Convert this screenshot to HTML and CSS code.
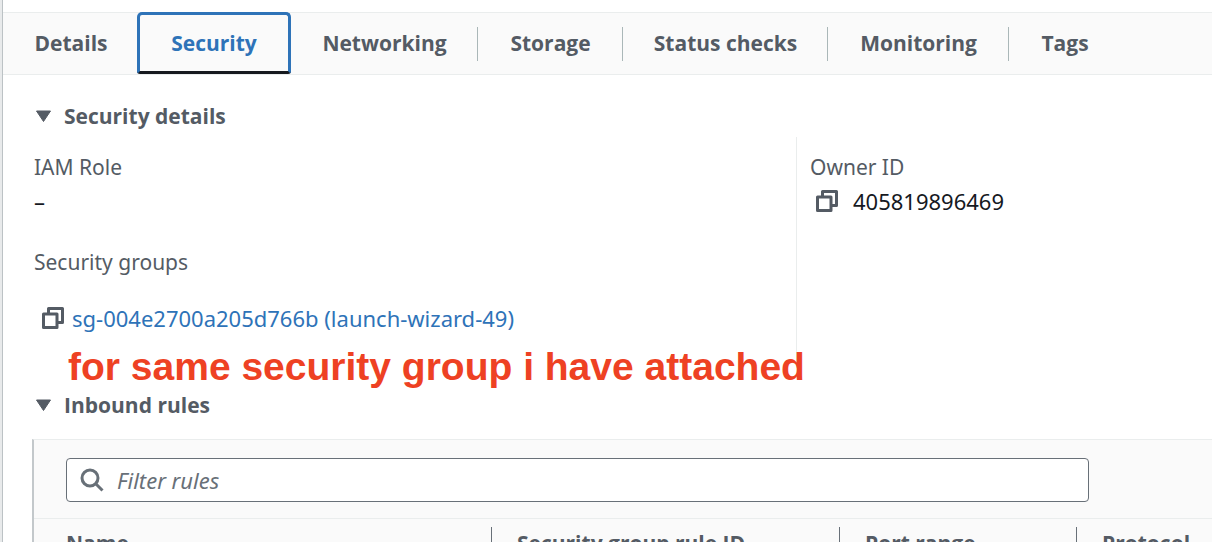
FILE: index.html
```html
<!DOCTYPE html>
<html lang="en">
<head>
<meta charset="utf-8">
<title>Instance security</title>
<link rel="stylesheet" href="styles.css">
</head>
<body>
<svg class="sprite" aria-hidden="true">
  <symbol id="copy" viewBox="0 0 24 24">
    <path d="M2.500 8h13.500v13.500h-13.500zM7.500 8V2.500h14v14h-5.500" fill="none" stroke="currentColor" stroke-width="3" stroke-linejoin="round"/>
  </symbol>
</svg>
<main class="panel">
  <nav class="tabs" role="tablist">
    <button class="tab" role="tab">Details</button>
    <button class="tab tab-active" role="tab" aria-selected="true">Security</button>
    <button class="tab" role="tab">Networking</button>
    <button class="tab" role="tab">Storage</button>
    <button class="tab" role="tab">Status checks</button>
    <button class="tab" role="tab">Monitoring</button>
    <button class="tab" role="tab">Tags</button>
  </nav>
  <section class="section">
    <h2 class="heading"><button class="toggle" aria-expanded="true"><svg class="caret" viewBox="0 0 18 14"><path d="M2.500 2h14L9.500 12.500z" fill="currentColor" stroke="currentColor" stroke-linejoin="round"/></svg>Security details</button></h2>
    <div class="details">
      <dl class="column">
        <dt class="label">IAM Role</dt>
        <dd class="value">–</dd>
        <dt class="label label-groups">Security groups</dt>
        <dd class="group-row"><button class="copy" aria-label="Copy security group"><svg class="icon"><use href="#copy"/></svg></button><a class="link" href="#">sg-004e2700a205d766b (launch-wizard-49)</a></dd>
      </dl>
      <dl class="column column-owner">
        <dt class="label">Owner ID</dt>
        <dd class="value owner"><button class="copy" aria-label="Copy owner ID"><svg class="icon"><use href="#copy"/></svg></button>405819896469</dd>
      </dl>
      <p class="note">for same security group i have attached</p>
    </div>
  </section>
  <section class="section section-rules">
    <h2 class="heading"><button class="toggle" aria-expanded="true"><svg class="caret" viewBox="0 0 18 14"><path d="M2.500 2h14L9.500 12.500z" fill="currentColor" stroke="currentColor" stroke-linejoin="round"/></svg>Inbound rules</button></h2>
    <div class="rules">
      <div class="filter">
        <label class="search">
          <svg class="search-icon" viewBox="0 0 24 24"><circle cx="10" cy="10" r="8" fill="none" stroke="currentColor" stroke-width="3"/><path d="M15.500 15.500L22.500 22.500" stroke="currentColor" stroke-width="3"/></svg>
          <input class="search-input" type="text" placeholder="Filter rules" aria-label="Filter rules">
        </label>
      </div>
      <table class="table">
        <thead><tr>
          <th class="th th-name"><span class="cell">Name</span></th>
          <th class="th th-id"><span class="cell">Security group rule ID</span></th>
          <th class="th th-port"><span class="cell">Port range</span></th>
          <th class="th"><span class="cell">Protocol</span></th>
        </tr></thead>
      </table>
    </div>
  </section>
</main>
</body>
</html>
```
FILE: styles.css
```css
* { box-sizing: border-box; }
body {
  margin: 0;
  height: 100vh;
  overflow: hidden;
  background: #fff;
  color: #16191f;
  font: 21px/32px "Noto Sans", "Open Sans", sans-serif;
}
button { padding: 0; border: 0; background: none; color: inherit; font: inherit; }
.sprite { position: absolute; width: 0; height: 0; }
.panel {
  min-height: 100vh;
  padding: 12px 0 0 3px;
  background: linear-gradient(to right, #e8eaeb 2px, #bcc2c5 2px, #bcc2c5 3px, #fff 3px);
}
.tabs {
  display: grid;
  grid-template-columns: 136px 152px 187px 145px 205px 181px 112px;
  height: 63px;
  border-top: 1px solid #eaeded;
  border-bottom: 1px solid #eaeded;
  background: #fafafa;
  color: #545b64;
  font: 700 21px/32px "Open Sans", sans-serif;
}
.tab {
  display: flex;
  align-items: center;
  justify-content: center;
  padding-bottom: 1px;
  white-space: nowrap;
  background: linear-gradient(#aab7b8, #aab7b8) right center / 1px 34px no-repeat;
}
.tab:first-child, .tab:last-child { background: none; }
.tab-active {
  margin: -1px 0 0 -2px;
  padding-bottom: 0;
  border: 3px solid #2e73b8;
  border-bottom-color: #16191f;
  border-radius: 5px 5px 3px 3px;
  background: #fafafa;
  color: #2e73b8;
}
.section { padding-left: 31px; }
.heading {
  margin: 0;
  color: #545b64;
  font: 700 21px/32px "Open Sans", sans-serif;
}
.section > .heading { padding-top: 25px; }
.toggle { display: flex; align-items: center; gap: 12px; }
.caret { width: 18px; height: 14px; }
.details {
  position: relative;
  display: grid;
  grid-template-columns: 762px 1fr;
  padding: 5px 0 16px;
}
.column { margin: 0; padding: 14px 0 34px; }
.column-owner { padding-left: 13px; border-left: 1px solid #eaeded; }
.label { color: #545b64; }
.label-groups { margin-top: 29px; }
.value { margin: 2px 0 0; font-size: 22px; }
.owner { display: flex; align-items: center; gap: 14px; padding-left: 5px; }
.group-row {
  display: flex;
  align-items: center;
  gap: 7px;
  margin: 24px 0 0;
  padding-left: 7px;
  font-size: 22px;
}
.copy { display: flex; color: #545b64; }
.icon { width: 24px; height: 24px; }
.link { color: #2e73b8; text-decoration: none; }
.note {
  position: absolute;
  left: 34px;
  top: 213px;
  margin: 0;
  color: #ee4123;
  font: 700 39px/44px "Liberation Sans", Arial, sans-serif;
  white-space: nowrap;
}
.section-rules > .heading { padding-top: 5px; }
.rules {
  margin: 18px 0 0 -2px;
  border-top: 1px solid #eaeded;
  border-left: 2px solid #c3c8cb;
  background: #fafafa;
}
.filter { padding: 18px 123px 16px 32px; border-bottom: 1px solid #eaeded; }
.search {
  display: flex;
  align-items: center;
  gap: 13px;
  height: 44px;
  padding: 0 13px;
  border: 1px solid #687078;
  border-radius: 4px;
  background: #fff;
  color: #687078;
}
.search-icon { flex: none; width: 24px; height: 24px; }
.search-input {
  flex: 1;
  border: 0;
  padding: 0;
  outline: 0;
  background: none;
  font: inherit;
  font-size: 22px;
}
.search-input::placeholder { color: #687078; font-style: italic; opacity: 1; }
.table { width: 100%; table-layout: fixed; border-collapse: collapse; }
.th {
  padding: 8px 0;
  color: #545b64;
  font: 700 21px/32px "Open Sans", sans-serif;
  text-align: left;
}
.th-name { width: 457px; }
.th-id { width: 348px; }
.th-port { width: 237px; }
.cell { display: block; padding-left: 25px; border-left: 1px solid #687078; white-space: nowrap; }
.th-name .cell { padding-left: 32px; border-left: 0; }
```
